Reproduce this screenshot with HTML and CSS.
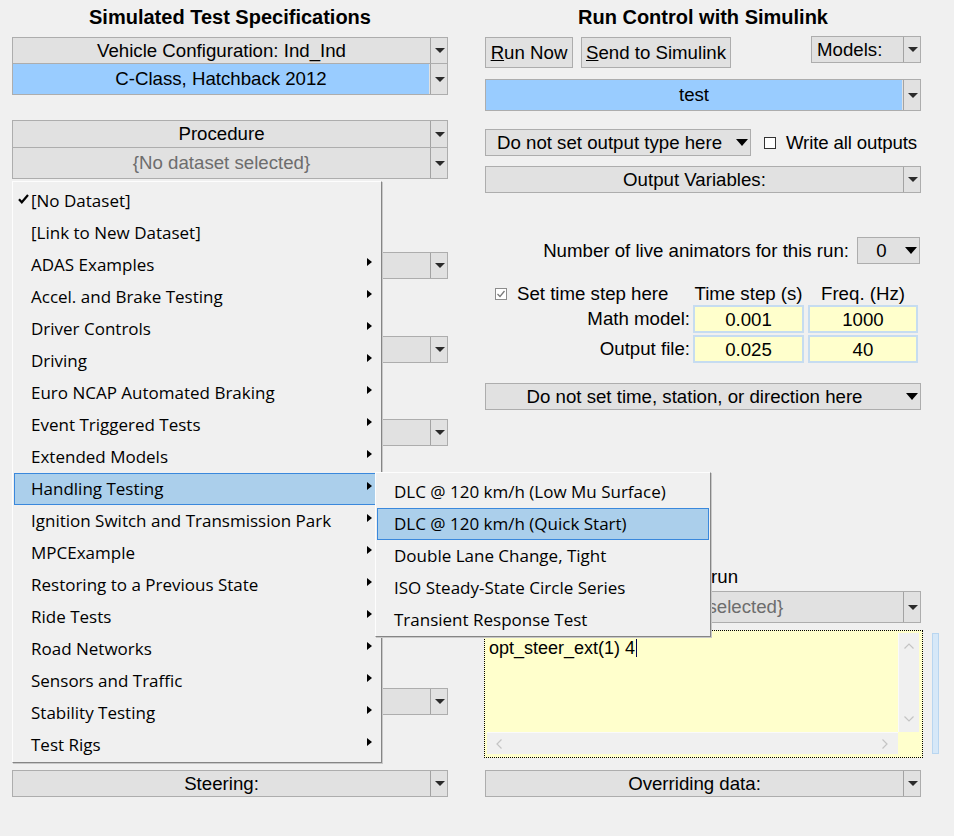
FILE: index.html
```html
<!DOCTYPE html>
<html>
<head>
<meta charset="utf-8">
<title>Run Control</title>
<link rel="stylesheet" href="styles.css">
</head>
<body>
<div class="app">
  <section class="col left">
    <h1 class="title">Simulated Test Specifications</h1>
    <div class="dd"><span class="dd-text">Vehicle Configuration: Ind_Ind</span><span class="dd-btn"><i class="tri"></i></span></div>
    <div class="dd tall join"><span class="dd-text sel">C-Class, Hatchback 2012</span><span class="dd-btn"><i class="tri"></i></span></div>
    <div class="dd proc"><span class="dd-text">Procedure</span><span class="dd-btn"><i class="tri"></i></span></div>
    <div class="dd tall join"><span class="dd-text muted">{No dataset selected}</span><span class="dd-btn"><i class="tri"></i></span></div>
    <div class="dd misc1"><span class="dd-text"></span><span class="dd-btn"><i class="tri"></i></span></div>
    <div class="dd misc2"><span class="dd-text"></span><span class="dd-btn"><i class="tri"></i></span></div>
    <div class="dd misc3"><span class="dd-text"></span><span class="dd-btn"><i class="tri"></i></span></div>
    <div class="dd misc4"><span class="dd-text"></span><span class="dd-btn"><i class="tri"></i></span></div>
    <div class="dd misc5"><span class="dd-text">Steering:</span><span class="dd-btn"><i class="tri"></i></span></div>
  </section>

  <section class="col right">
    <h1 class="title">Run Control with Simulink</h1>
    <div class="toprow">
      <div class="buttons">
        <button class="btn run"><u>R</u>un Now</button>
        <button class="btn send"><u>S</u>end to Simulink</button>
      </div>
      <div class="dd models"><span class="dd-text lefttext">Models:</span><span class="dd-btn"><i class="tri"></i></span></div>
    </div>
    <div class="dd tall test"><span class="dd-text sel">test</span><span class="dd-btn"><i class="tri"></i></span></div>
    <div class="outrow">
      <div class="dd plain outtype"><span class="dd-text">Do not set output type here</span><span class="dd-btn"><i class="tri big"></i></span></div>
      <label class="chk"><span class="box"></span>Write all outputs</label>
    </div>
    <div class="dd outvars"><span class="dd-text">Output Variables:</span><span class="dd-btn"><i class="tri"></i></span></div>
    <div class="animrow">
      <span>Number of live animators for this run:</span>
      <div class="dd plain anim"><span class="dd-text">0</span><span class="dd-btn"><i class="tri big"></i></span></div>
    </div>
    <div class="tgrid">
      <label class="chk setstep"><span class="box checked"><svg viewBox="0 0 10 10" width="10" height="10"><path d="M1.5 5 L4 7.5 L8.5 2" fill="none" stroke="#7a7a7a" stroke-width="1.3"/></svg></span>Set time step here</label>
      <span class="hd">Time step (s)</span>
      <span class="hd">Freq. (Hz)</span>
      <span class="lbl">Math model:</span>
      <span class="inp">0.001</span>
      <span class="inp">1000</span>
      <span class="lbl row3">Output file:</span>
      <span class="inp row3">0.025</span>
      <span class="inp row3">40</span>
    </div>
    <div class="dd plain timedd"><span class="dd-text">Do not set time, station, or direction here</span><span class="dd-btn"><i class="tri big"></i></span></div>
    <div class="runlabel">Miscellaneous data for this run</div>
    <div class="dd tall dset"><span class="dd-text muted">{No dataset selected}</span><span class="dd-btn"><i class="tri"></i></span></div>
    <div class="tarow">
      <div class="ta-wrap">
        <div class="ta">
          <div class="ta-text">opt_steer_ext(1) 4<span class="caret"></span></div>
          <div class="vscroll">
            <svg viewBox="0 0 10 6" width="10" height="6"><path d="M0.5 5.5 L5 1 L9.5 5.5" fill="none" stroke="#c4c4c4" stroke-width="1.2"/></svg>
            <svg viewBox="0 0 10 6" width="10" height="6"><path d="M0.5 0.5 L5 5 L9.5 0.5" fill="none" stroke="#c4c4c4" stroke-width="1.2"/></svg>
          </div>
          <div class="hscroll">
            <svg viewBox="0 0 6 10" width="6" height="10"><path d="M5.5 0.5 L1 5 L5.5 9.5" fill="none" stroke="#c4c4c4" stroke-width="1.2"/></svg>
            <svg viewBox="0 0 6 10" width="6" height="10"><path d="M0.5 0.5 L5 5 L0.5 9.5" fill="none" stroke="#c4c4c4" stroke-width="1.2"/></svg>
          </div>
          <div class="corner"></div>
        </div>
      </div>
      <div class="slider"></div>
    </div>
    <div class="dd override"><span class="dd-text">Overriding data:</span><span class="dd-btn"><i class="tri"></i></span></div>
  </section>

  <div class="menu">
    <div class="mi"><svg class="check" viewBox="0 0 11 10" width="11" height="10"><path d="M1 5.2 L3.8 8.3 L10 1" fill="none" stroke="#000" stroke-width="2.2"/></svg>[No Dataset]</div>
    <div class="mi">[Link to New Dataset]</div>
    <div class="mi sub">ADAS Examples</div>
    <div class="mi sub">Accel. and Brake Testing</div>
    <div class="mi sub">Driver Controls</div>
    <div class="mi sub">Driving</div>
    <div class="mi sub">Euro NCAP Automated Braking</div>
    <div class="mi sub">Event Triggered Tests</div>
    <div class="mi sub">Extended Models</div>
    <div class="mi sub hl">Handling Testing</div>
    <div class="mi sub">Ignition Switch and Transmission Park</div>
    <div class="mi sub">MPCExample</div>
    <div class="mi sub">Restoring to a Previous State</div>
    <div class="mi sub">Ride Tests</div>
    <div class="mi sub">Road Networks</div>
    <div class="mi sub">Sensors and Traffic</div>
    <div class="mi sub">Stability Testing</div>
    <div class="mi sub">Test Rigs</div>
  </div>

  <div class="menu submenu">
    <div class="mi">DLC @ 120 km/h (Low Mu Surface)</div>
    <div class="mi hl">DLC @ 120 km/h (Quick Start)</div>
    <div class="mi">Double Lane Change, Tight</div>
    <div class="mi">ISO Steady-State Circle Series</div>
    <div class="mi">Transient Response Test</div>
  </div>
</div>
</body>
</html>
```

FILE: styles.css
```css
* { box-sizing: border-box; }

html, body {
  margin: 0;
  background: #f0f0f0;
}

body {
  width: 954px;
  height: 836px;
  overflow: hidden;
  font-family: "Liberation Sans", Arial, sans-serif;
  font-size: 18.67px;
  color: #000;
}

.app {
  position: relative;
  display: flex;
  gap: 37px;
  padding-left: 12px;
  height: 836px;
}

.col {
  width: 436px;
  display: flex;
  flex-direction: column;
}

.title {
  margin: 0;
  height: 37px;
  line-height: 34px;
  font-size: 20px;
  font-weight: bold;
  text-align: center;
  flex: none;
}

/* dropdowns */
.dd {
  flex: none;
  display: flex;
  height: 27px;
  border: 1px solid #adadad;
  background: #e1e1e1;
}
.dd.tall { height: 32px; }
.dd.join { margin-top: -1px; }

.dd-text {
  flex: 1;
  display: flex;
  align-items: center;
  justify-content: center;
  white-space: nowrap;
  line-height: 1;
  padding-top: 1px;
}
.dd-text.sel { background: #99ccff; margin-right: 1px; }
.dd-text.muted { color: #6d6d6d; }
.dd-text.lefttext { justify-content: flex-start; padding-left: 5px; }

.dd-btn {
  width: 17px;
  flex: none;
  display: flex;
  align-items: center;
  justify-content: center;
  border-left: 1px solid #a3a3a3;
}
.dd.plain .dd-btn { border-left: none; }

.tri {
  display: block;
  width: 0;
  height: 0;
  border-left: 5.5px solid transparent;
  border-right: 5.5px solid transparent;
  border-top: 5px solid #2a2a2a;
  margin-left: 1px;
}
.tri.big {
  border-left-width: 6px;
  border-right-width: 6px;
  border-top: 7px solid #000;
  margin-left: 0;
}

/* left column spacing */
.left .proc { margin-top: 25px; height: 28px; }
.left .misc1 { margin-top: 73px; }
.left .misc2 { margin-top: 57px; }
.left .misc3 { margin-top: 56px; }
.left .misc4 { margin-top: 242px; }
.left .misc5 { margin-top: 55px; }

/* right column */
.toprow {
  display: flex;
  justify-content: space-between;
  align-items: flex-start;
  height: 31px;
  flex: none;
}
.buttons { display: flex; gap: 8px; }
.btn {
  height: 31px;
  border: 1px solid #adadad;
  background: #e1e1e1;
  font: inherit;
  color: #000;
  padding: 1px 0 0;
  line-height: 1;
}
.btn.run { width: 88px; }
.btn.send { width: 150px; }
.dd.models { width: 110px; margin-top: -1px; }

.test { margin-top: 11px; }

.outrow {
  margin-top: 18px;
  display: flex;
  align-items: center;
  flex: none;
}
.dd.outtype { width: 266px; }
.chk {
  display: flex;
  align-items: center;
  white-space: nowrap;
}
.outrow .chk { margin-left: 13px; letter-spacing: -0.15px; }
.box {
  width: 12px;
  height: 12px;
  border: 1px solid #333;
  background: #fff;
  margin-right: 10px;
  display: flex;
  align-items: center;
  justify-content: center;
}
.box.checked { border-color: #8c8c8c; }

.outvars { margin-top: 10px; }

.animrow {
  margin-top: 44px;
  display: flex;
  justify-content: flex-end;
  align-items: center;
  gap: 8px;
  padding-right: 1px;
  flex: none;
}
.dd.anim { width: 63px; }
.anim .dd-text { padding-left: 3px; }

.tgrid {
  margin-top: 18px;
  display: grid;
  grid-template-columns: 204px 111px 110px;
  grid-template-rows: 23px 28px 30px;
  column-gap: 4px;
  flex: none;
}
.setstep { padding-left: 10px; }
.hd {
  text-align: center;
  align-self: center;
  white-space: nowrap;
}
.lbl {
  text-align: right;
  align-self: center;
  white-space: nowrap;
  margin-right: -1px;
}
.inp {
  background: #ffffcc;
  border: 2px solid #c6dcf0;
  display: flex;
  align-items: center;
  justify-content: center;
  padding-top: 1px;
}
.inp.row3 { margin-top: 2px; }
.lbl.row3 { padding-top: 2px; }

.timedd { margin-top: 20px; }

.runlabel {
  margin-top: 154px;
  height: 26px;
  line-height: 26px;
  text-align: right;
  padding-right: 189px;
  white-space: nowrap;
  flex: none;
}
.dset { margin-top: 1px; }

.tarow {
  margin-top: 7px;
  display: flex;
  align-items: flex-start;
  gap: 9px;
  margin-left: -1px;
  flex: none;
}
.ta-wrap {
  width: 439px;
  height: 128px;
  border: 1px dotted #000;
  background: #ffffcc;
  padding: 2px 3px 3px 2px;
  flex: none;
}
.ta {
  height: 100%;
  display: grid;
  grid-template-columns: 1fr 21px;
  grid-template-rows: 1fr 22px;
}
.ta-text {
  font-size: 18px;
  padding: 5px 0 0 2px;
  white-space: nowrap;
  line-height: 20px;
}
.caret {
  display: inline-block;
  width: 1px;
  height: 18px;
  background: #000050;
  vertical-align: -3px;
  margin-left: 1px;
}
.vscroll {
  background: #f0f0f0;
  border-left: 1px solid #fafafa;
  display: flex;
  flex-direction: column;
  justify-content: space-between;
  align-items: center;
  padding: 10px 0 10px;
}
.hscroll {
  background: #f0f0f0;
  border-top: 1px solid #fafafa;
  display: flex;
  justify-content: space-between;
  align-items: center;
  padding: 0 10px 0 9px;
}
.corner { background: #ffffcc; }
.slider {
  width: 7px;
  height: 121px;
  margin-top: 3px;
  background: #d6e8f8;
  border: 1px solid #b9d6f0;
  flex: none;
}

.override { margin-top: 12px; }

/* popup menus */
.menu {
  position: absolute;
  left: 12px;
  top: 181px;
  width: 370px;
  padding: 3px 5px 1px 1px;
  background: #f0f0f0;
  border: 1px solid;
  border-color: #fdfdfd #858585 #858585 #fdfdfd;
  box-shadow: 1px 1px 0 #c8c8c8;
  font-family: "Open Sans", "Noto Sans", sans-serif;
  font-size: 17px;
  z-index: 2;
}
.mi {
  position: relative;
  height: 32px;
  display: flex;
  align-items: center;
  padding-left: 16px;
  padding-bottom: 2px;
  border: 1px solid transparent;
  white-space: nowrap;
}
.mi.sub::after {
  content: "";
  position: absolute;
  right: 3px;
  top: 8px;
  width: 0;
  height: 0;
  border-left: 5px solid #000;
  border-top: 4.5px solid transparent;
  border-bottom: 4.5px solid transparent;
}
.mi.hl {
  background: #abcfeb;
  border-color: #3a88dc;
}
.check {
  position: absolute;
  left: 3px;
  top: 8px;
}

.submenu {
  left: 375px;
  top: 472px;
  width: 336px;
  padding: 3px 1px 0 1px;
  z-index: 3;
}
```
